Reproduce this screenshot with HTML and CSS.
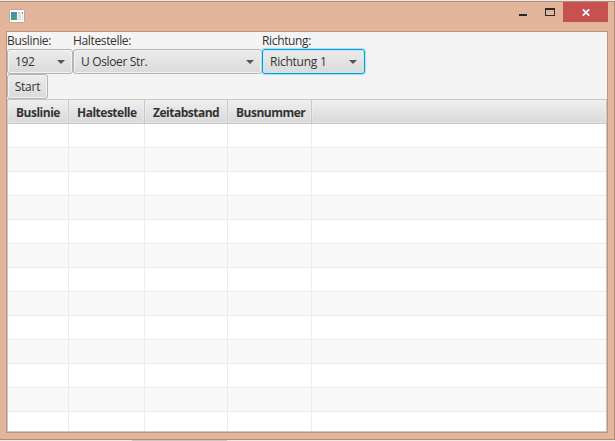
FILE: index.html
```html
<!DOCTYPE html>
<html lang="de">
<head>
<meta charset="utf-8">
<title>Buslinie</title>
<link rel="stylesheet" href="styles.css">
</head>
<body>
<div class="window">
  <header class="titlebar">
    <svg class="app-icon" width="16" height="14" viewBox="0 0 16 14">
      <defs><linearGradient id="pic" x2="0.6" y2="1"><stop stop-color="#5983ad"/><stop offset="1" stop-color="#42a576"/></linearGradient></defs>
      <rect x=".5" y=".5" width="15" height="13" rx="1" fill="#fafafa" stroke="#b9a8a0"/>
      <path d="M2 3h6v8H2z" fill="url(#pic)"/>
      <path d="M9 3h3v8H9z" fill="#dedede"/>
      <path d="M13 3h1v2h-1z" fill="#5baa82"/>
      <path d="M13 6h1v5h-1z" fill="#dedede"/>
    </svg>
    <div class="controls">
      <svg width="66" height="20" viewBox="0 0 66 20" shape-rendering="crispEdges">
        <path d="M22 12h8v2h-8z" fill="#292929"/>
        <path d="M48 6h10v8H48zM49 8v5h8V8z" fill="#292929" fill-rule="evenodd"/>
      </svg>
      <div class="close"><svg width="8" height="7" viewBox="0 0 8 7"><path d="M.8.3 7.2 6.7M7.2.3.8 6.7" stroke="#fff" stroke-width="1.7"/></svg></div>
    </div>
  </header>
  <main class="content">
    <div class="fields">
      <div class="field line"><label>Buslinie:</label><div class="combo"><span>192</span><i></i></div></div>
      <div class="field stop"><label>Haltestelle:</label><div class="combo"><span>U Osloer Str.</span><i></i></div></div>
      <div class="field direction"><label>Richtung:</label><div class="combo focused"><span>Richtung 1</span><i></i></div></div>
    </div>
    <button class="start">Start</button>
    <div class="table">
      <div class="row head"><div>Buslinie</div><div>Haltestelle</div><div>Zeitabstand</div><div>Busnummer</div><div></div></div>
      <div class="row"><div></div><div></div><div></div><div></div><div></div></div>
      <div class="row"><div></div><div></div><div></div><div></div><div></div></div>
      <div class="row"><div></div><div></div><div></div><div></div><div></div></div>
      <div class="row"><div></div><div></div><div></div><div></div><div></div></div>
      <div class="row"><div></div><div></div><div></div><div></div><div></div></div>
      <div class="row"><div></div><div></div><div></div><div></div><div></div></div>
      <div class="row"><div></div><div></div><div></div><div></div><div></div></div>
      <div class="row"><div></div><div></div><div></div><div></div><div></div></div>
      <div class="row"><div></div><div></div><div></div><div></div><div></div></div>
      <div class="row"><div></div><div></div><div></div><div></div><div></div></div>
      <div class="row"><div></div><div></div><div></div><div></div><div></div></div>
      <div class="row"><div></div><div></div><div></div><div></div><div></div></div>
      <div class="row"><div></div><div></div><div></div><div></div><div></div></div>
    </div>
  </main>
</div>
<div class="desktop-edge"></div>
</body>
</html>
```
FILE: styles.css
```css
* { box-sizing: border-box; }
body {
  margin: 0;
  padding-top: 1px;
  height: 441px;
  overflow: hidden;
  background: #e9e9e9;
  font: 12px/16px "Open Sans", "Noto Sans", sans-serif;
  color: #333;
}
.window {
  height: 439px;
  padding: 0 6px 6px;
  background: #e3b59b;
  border: solid #b08b77;
  border-width: 1px 1px 1px 0;
}
.titlebar {
  display: flex;
  justify-content: space-between;
  height: 29px;
}
.app-icon { margin: 7px 0 0 3px; }
.controls { display: flex; height: 20px; }
.close {
  width: 45px;
  height: 20px;
  display: flex;
  align-items: center;
  justify-content: center;
  background: #c75050;
}
.close svg { margin: 1px 0 0 1px; }
.content {
  height: 402px;
  border: 1px solid #b99580;
  background: #f4f4f4;
  overflow: hidden;
}
.fields { display: flex; height: 42px; }
.line { width: 66px; }
.stop { width: 189px; }
.direction { width: 103px; }
label {
  display: block;
  height: 17px;
  line-height: 18px;
  letter-spacing: -0.35px;
  white-space: nowrap;
}
.combo {
  height: 25px;
  display: flex;
  align-items: center;
  justify-content: space-between;
  padding: 0 7px;
  border: 1px solid #b5b5b5;
  border-radius: 3px;
  background: linear-gradient(#ececec, #dadada);
  box-shadow: inset 0 0 0 1px #f3f3f3;
  letter-spacing: -0.35px;
  white-space: nowrap;
}
.combo i {
  border: 4px solid transparent;
  border-top-color: #555;
  border-bottom: 0;
}
.focused {
  letter-spacing: -0.25px;
  border-color: #039ed3;
  box-shadow: 0 0 1px 1px #a8dcf0, inset 0 0 1px 1px #cbe8f3;
}
.start {
  display: block;
  width: 41px;
  height: 25px;
  padding: 0;
  border: 1px solid #b5b5b5;
  border-radius: 3px;
  background: linear-gradient(#ececec, #dadada);
  box-shadow: inset 0 0 0 1px #f3f3f3;
  font: inherit;
  letter-spacing: -0.25px;
  color: inherit;
}
.table {
  height: 333px;
  border: 1px solid #c8c8c8;
  background: #fff;
  overflow: hidden;
}
.row {
  display: grid;
  grid-template-columns: 61px 76px 83px 84px 1fr;
  grid-template-rows: 24px;
  height: 24px;
}
.row > div {
  border: solid #ececec;
  border-width: 0 1px 1px 0;
}
.row > div:last-child { border-right: 0; }
.row:nth-child(odd) { background: #f9f9f9; }
.row.head > div {
  padding-left: 8px;
  background: linear-gradient(#efefef, #d9d9d9);
  border-color: #c8c8c8;
  box-shadow: inset 0 0 0 1px #f0f0f080;
  font-weight: bold;
  line-height: 26px;
  letter-spacing: -0.5px;
  white-space: nowrap;
}
.desktop-edge {
  width: 95px;
  height: 1px;
  margin-left: 132px;
  background: #c8c8c8;
}
```
